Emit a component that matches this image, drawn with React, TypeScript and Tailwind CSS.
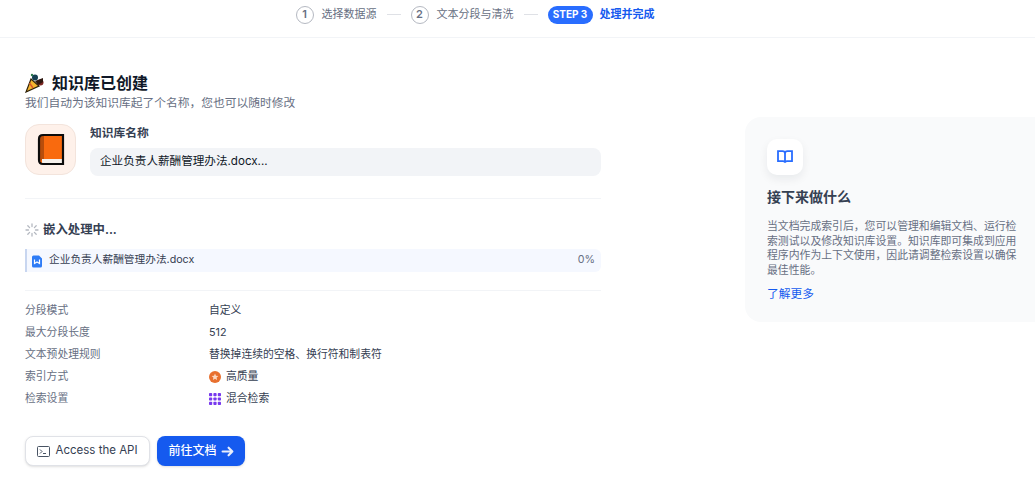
import React from "react";

const font = { fontFamily: '"Inter","Noto Sans CJK SC",sans-serif' };

function Step({ n, label }: { n: string; label: string }) {
  return (
    <div className="flex items-center gap-2">
      <div className="flex h-[18px] w-[18px] items-center justify-center rounded-full border border-[#b5b9c2] text-[11px] font-semibold text-[#676f83]">{n}</div>
      <span className="text-[11px] text-[#676f83]">{label}</span>
    </div>
  );
}

function Row({ k, children }: { k: string; children: React.ReactNode }) {
  return (
    <div className="flex h-[22px] items-center text-[10.8px]">
      <div className="w-[184px] text-[#676f83]">{k}</div>
      <div className="flex items-center gap-[5px] text-[#354052]">{children}</div>
    </div>
  );
}

function BookEmoji() {
  return (
    <svg width="28" height="33" viewBox="0 0 28 33">
      <path d="M6 2H26V31H6C3.500 31 2 29.500 2 27V6C2 3.500 3.500 2 6 2Z" fill="#f96a0e" />
      <path d="M7 3H3V28L7 26Z" fill="#b84d0b" />
      <rect x="5" y="26" width="20" height="4" fill="#f6f1ec" />
      <path d="M6 2H26V31H6C3.500 31 2 29.500 2 27V6C2 3.500 3.500 2 6 2Z" fill="none" stroke="#0c0c0c" strokeWidth="2.200" />
    </svg>
  );
}

function Popper() {
  return (
    <svg width="20" height="20" viewBox="0 0 20 20">
      <path d="M6 6L14 13L1 19Z" fill="#f5b52e" stroke="#2e2108" strokeWidth="1.200" />
      <path d="M4.500 10L8 15" stroke="#d9572b" strokeWidth="1.400" />
      <circle cx="10" cy="4.500" r="3" fill="#153f52" />
      <circle cx="15.500" cy="9.500" r="3" fill="#7d2622" />
      <path d="M10 8l8-3v4l-5 3z" fill="#2e1710" />
      <circle cx="7" cy="2" r="1.200" fill="#2b7a4b" />
    </svg>
  );
}

export default function App() {
  return (
    <div style={font} className="h-[483px] w-[1035px] overflow-hidden bg-white">
      <header className="flex h-[38px] items-center justify-center gap-[10px] border-b border-[#f2f4f7] pb-[8px] pr-[85px]">
        <Step n="1" label="选择数据源" />
        <div className="h-px w-[14px] bg-[#dfe1e6]" />
        <Step n="2" label="文本分段与清洗" />
        <div className="h-px w-[14px] bg-[#dfe1e6]" />
        <div className="flex items-center gap-[7px]">
          <div className="flex h-[18px] w-[45px] items-center justify-center rounded-full bg-[#296dff] text-[10px] font-bold text-white">STEP 3</div>
          <span className="text-[11px] font-semibold text-[#155aef]">处理并完成</span>
        </div>
      </header>

      <div className="flex">
        <main className="w-[745px] pl-[25px] pt-[35px]">
          <div className="w-[576px]">
            <div className="flex items-center gap-[7px] text-[16px] font-semibold leading-5 text-[#101828]">
              <Popper />
              <span>知识库已创建</span>
            </div>
            <p className="mt-[1px] text-[11.75px] leading-[18px] text-[#676f83]">我们自动为该知识库起了个名称，您也可以随时修改</p>

            <div className="mt-[12px] flex gap-[14px]">
              <div className="flex h-[51px] w-[51px] items-center justify-center rounded-[14px] border border-[#f3e4dc] bg-[#fef1ea]">
                <BookEmoji />
              </div>
              <div className="flex-1">
                <div className="text-[11.75px] font-semibold leading-[18px] text-[#354052]">知识库名称</div>
                <div className="mt-[6px] flex h-[28px] items-center rounded-lg bg-[#f2f4f7] px-[10px] text-[11.6px] text-[#101828]">企业负责人薪酬管理办法.docx...</div>
              </div>
            </div>

            <div className="mt-[22px] h-px bg-[#f2f4f7]" />

            <div className="mt-[21px] flex items-center gap-[4px] text-[12.4px] font-semibold leading-5 text-[#354052]">
              <svg width="14" height="14" viewBox="0 0 14 14" stroke="#b4b8c0" strokeWidth="1.300" strokeLinecap="round">
                <path d="M7 1v2.500M7 10.500V13M1 7h2.500M10.500 7H13M2.800 2.800l1.800 1.800M9.400 9.400l1.800 1.800M2.800 11.200l1.800-1.800M9.400 4.600l1.800-1.800" />
              </svg>
              <span>嵌入处理中...</span>
            </div>

            <div className="mt-[9px] flex h-[23px] items-center rounded-r-md border-l-2 border-[#c8d6f0] bg-[#f5f8ff] pl-[4px] pr-[6px] text-[10.7px] text-[#354052]">
              <svg width="12" height="14" viewBox="0 0 12 14" className="mr-[6px]">
                <path d="M2.500 1.500h5.500l3 3v7.500a1.500 1.500 0 0 1-1.500 1.500h-7a1.500 1.500 0 0 1-1.500-1.500v-9a1.500 1.500 0 0 1 1.500-1.500Z" fill="#2e7cf6" />
                <path d="M3.500 5.500v4l2.500-1.500 2.500 1.500v-4" fill="none" stroke="#fff" strokeWidth="1.200" />
              </svg>
              <span className="flex-1">企业负责人薪酬管理办法.docx</span>
              <span className="text-[#676f83]">0%</span>
            </div>

            <div className="mt-[18px] h-px bg-[#f2f4f7]" />

            <div className="mt-[9px]">
              <Row k="分段模式">自定义</Row>
              <Row k="最大分段长度">512</Row>
              <Row k="文本预处理规则">替换掉连续的空格、换行符和制表符</Row>
              <Row k="索引方式">
                <svg width="12" height="12" viewBox="0 0 12 12">
                  <circle cx="6" cy="6" r="6" fill="#e8702f" />
                  <path d="M6 2.600l1 2.200 2.400.2-1.800 1.600.5 2.400L6 7.800 3.900 9l.5-2.400L2.600 5l2.400-.2Z" fill="#fbd9c3" />
                </svg>
                <span>高质量</span>
              </Row>
              <Row k="检索设置">
                <svg width="12" height="12" viewBox="0 0 12 12" fill="#7839ee">
                  {[0, 4.4, 8.8].flatMap((y) =>
                    [0, 4.4, 8.8].map((x) => <rect key={`${x}-${y}`} x={x} y={y} width="3.200" height="3.200" rx="0.800" />)
                  )}
                </svg>
                <span>混合检索</span>
              </Row>
            </div>

            <div className="mt-[26px] flex gap-[7px]">
              <button className="flex h-[30px] w-[125px] items-center justify-center gap-[5px] rounded-lg border border-[#e0e2e7] bg-white text-[11.5px] text-[#354052] shadow-sm">
                <svg width="13" height="13" viewBox="0 0 13 13" fill="none" stroke="#495464" strokeWidth="1">
                  <rect x="0.500" y="1.500" width="12" height="10" rx="1" />
                  <path d="M3 4.500l2 2-2 2M6 8.500h3" />
                </svg>
                <span>Access the API</span>
              </button>
              <button className="flex h-[30px] w-[88px] items-center justify-center gap-[4px] rounded-lg bg-[#155aef] text-[12px] font-medium text-white shadow-sm">
                <span>前往文档</span>
                <svg width="13" height="13" viewBox="0 0 12 12" fill="none" stroke="#e8eefc" strokeWidth="2" strokeLinecap="round" strokeLinejoin="round">
                  <path d="M1.500 6h9M7 2.500L10.500 6 7 9.500" />
                </svg>
              </button>
            </div>
          </div>
        </main>

        <aside className="mt-[79px] h-[205px] flex-1 rounded-l-2xl bg-[#f9fafb] pl-[22px] pr-[14px] pt-[22px]">
          <div className="flex h-9 w-9 items-center justify-center rounded-[10px] bg-white shadow-[0_4px_10px_rgba(16,24,40,0.07)]">
            <svg width="18" height="18" viewBox="0 0 18 18" fill="none" stroke="#296dff" strokeWidth="1.800">
              <path d="M2 3.200h4.500c1.400 0 2.500 1 2.500 2.300v9.300c0-.9-.9-1.600-2-1.600H2ZM16 3.200h-4.500C10.100 3.200 9 4.200 9 5.500v9.300c0-.9.900-1.600 2-1.600h5Z" />
            </svg>
          </div>
          <h3 className="mt-[12px] text-[14px] font-semibold leading-5 text-[#354052]">接下来做什么</h3>
          <p className="mt-[12px] text-[10.85px] leading-[14.7px] text-[#676f83]">当文档完成索引后，您可以管理和编辑文档、运行检索测试以及修改知识库设置。知识库即可集成到应用程序内作为上下文使用，因此请调整检索设置以确保最佳性能。</p>
          <a className="mt-[7px] block text-[11.75px] leading-[18px] text-[#155aef]">了解更多</a>
        </aside>
      </div>
    </div>
  );
}
